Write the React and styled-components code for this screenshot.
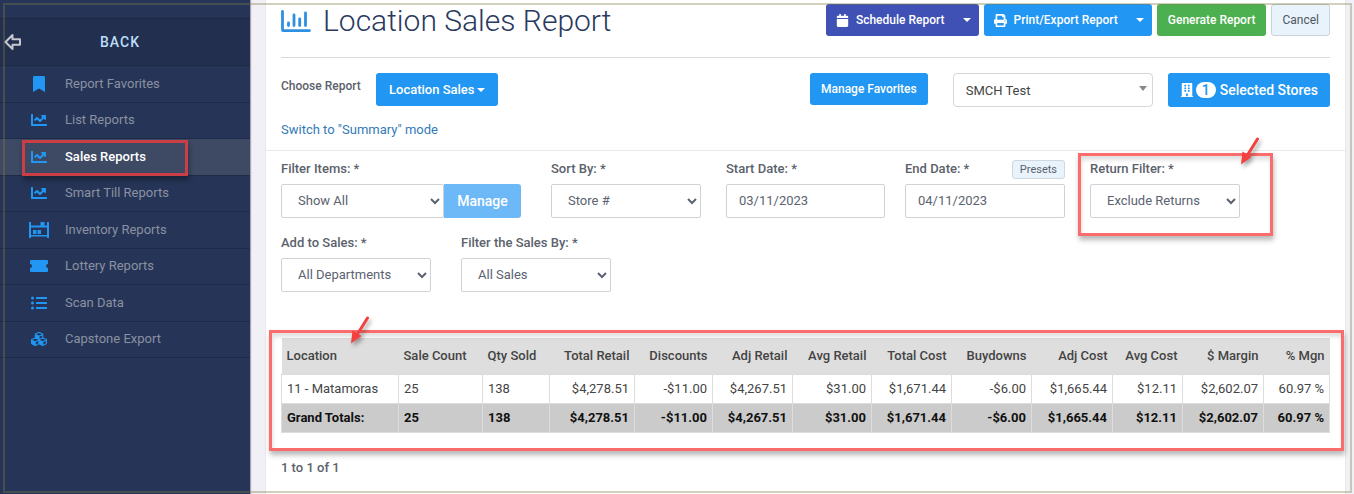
import React from "react";
import styled, { createGlobalStyle, css } from "styled-components";
import {
  FaBookmark,
  FaBuilding,
  FaCalendar,
  FaChartLine,
  FaCubes,
  FaListUl,
  FaPrint,
} from "react-icons/fa";

const GlobalStyle = createGlobalStyle`
  * {
    box-sizing: border-box;
  }
  body {
    margin: 0;
    background: #f1f0f6;
    color: #5b626b;
    font-family: Roboto, "Liberation Sans", sans-serif;
    font-size: 13px;
    line-height: 18px;
  }
  button, select, input {
    font-family: inherit;
    margin: 0;
  }
`;

const InventoryIcon = () => (
  <svg width="20" height="16" viewBox="0 0 20 16" fill="currentColor" aria-hidden="true">
    <path d="M0 0h2v3.500h16V0h2v16h-2v-1.500H2V16H0zM2 5.500v7.500h16V5.500z" fillRule="evenodd" />
    <path d="M11.500 0h4v4h-4zM4 8h3.500v4H4zM8.500 8h3.500v4H8.500z" />
  </svg>
);

const TicketIcon = () => (
  <svg width="18" height="12" viewBox="0 0 18 12" fill="currentColor" aria-hidden="true">
    <path d="M1 0h16a1 1 0 0 1 1 1v3a2 2 0 0 0 0 4v3a1 1 0 0 1-1 1H1a1 1 0 0 1-1-1V8a2 2 0 0 0 0-4V1a1 1 0 0 1 1-1z" />
  </svg>
);

const BackIcon = () => (
  <svg width="18" height="18" viewBox="0 0 18 18" fill="none" stroke="#c6c8cf" strokeWidth="2" strokeLinejoin="round" aria-hidden="true">
    <path d="M1.500 9 8.500 2v4.300H16v5.400H8.500V16z" />
  </svg>
);

const ChartIcon = () => (
  <svg width="30" height="22" viewBox="0 0 30 22" fill="none" stroke="#2f8fe0" strokeLinecap="round" aria-hidden="true">
    <path d="M1.500 1.500v18.600a.5.500 0 0 0 .5.500H28.500" strokeWidth="2.800" />
    <path d="M7.500 13v2.500M13 5v10.500M18.700 9v6.500M24.500 3v12.500" strokeWidth="2.800" />
  </svg>
);

const ArrowMark = () => (
  <svg width="22" height="30" viewBox="0 0 22 30" aria-hidden="true">
    <path d="M18.500 2 8.500 18" stroke="#f4403f" strokeWidth="3" strokeLinecap="round" />
    <path d="M2 27.500 3.500 14.500 12.500 20z" fill="#f4403f" />
  </svg>
);

const menu = [
  { name: "Report Favorites", icon: <FaBookmark /> },
  { name: "List Reports", icon: <FaChartLine /> },
  { name: "Sales Reports", icon: <FaChartLine />, active: true },
  { name: "Smart Till Reports", icon: <FaChartLine /> },
  { name: "Inventory Reports", icon: <InventoryIcon /> },
  { name: "Lottery Reports", icon: <TicketIcon /> },
  { name: "Scan Data", icon: <FaListUl /> },
  { name: "Capstone Export", icon: <FaCubes /> },
];

const columns = [
  { name: "Location", width: 117, left: true },
  { name: "Sale Count", width: 84, left: true },
  { name: "Qty Sold", width: 67, left: true },
  { name: "Total Retail", width: 85 },
  { name: "Discounts", width: 78 },
  { name: "Adj Retail", width: 80 },
  { name: "Avg Retail", width: 79 },
  { name: "Total Cost", width: 80 },
  { name: "Buydowns", width: 80 },
  { name: "Adj Cost", width: 81 },
  { name: "Avg Cost", width: 70 },
  { name: "$ Margin", width: 81 },
  { name: "% Mgn", width: 66 },
];

const values = [
  "25", "138", "$4,278.51", "-$11.00", "$4,267.51", "$31.00",
  "$1,671.44", "-$6.00", "$1,665.44", "$12.11", "$2,602.07", "60.97 %",
];

const SelectField = ({ id, label, value, marked }) => (
  <Field $width={150}>
    <LabelRow>
      <label htmlFor={id}>{label}</label>
    </LabelRow>
    <Select id={id} defaultValue={value}>
      <option>{value}</option>
    </Select>
    {marked && (
      <FieldMark>
        <ArrowMark />
      </FieldMark>
    )}
  </Field>
);

const Row = ({ first }) =>
  [first, ...values].map((value, i) => (
    <Cell key={columns[i].name} $left={columns[i].left}>
      {value}
    </Cell>
  ));

const App = () => {
  return (
    <Page>
      <GlobalStyle />
      <Sidebar>
        <BackButton type="button">
          <BackIcon />
          <span>BACK</span>
        </BackButton>
        <Menu>
          {menu.map(({ name, icon, active }) => (
            <MenuItem key={name} $active={active}>
              <a href="#">
                <MenuIcon>{icon}</MenuIcon>
                {name}
              </a>
            </MenuItem>
          ))}
        </Menu>
      </Sidebar>

      <Card>
        <Top>
          <Header>
            <Title>
              <ChartIcon />
              Location Sales Report
            </Title>
            <Actions>
              <SplitButton $color="#3f51b5">
                <button type="button">
                  <FaCalendar />
                  Schedule Report
                </button>
                <button type="button" aria-label="Schedule options">
                  <Caret />
                </button>
              </SplitButton>
              <SplitButton $color="#2196f3">
                <button type="button">
                  <FaPrint />
                  Print/Export Report
                </button>
                <button type="button" aria-label="Export options">
                  <Caret />
                </button>
              </SplitButton>
              <Button type="button" $color="#4caf50">Generate Report</Button>
              <LightButton type="button">Cancel</LightButton>
            </Actions>
          </Header>

          <ReportRow>
            <ChooseLabel>Choose Report</ChooseLabel>
            <Button type="button" $large>
              Location Sales
              <Caret />
            </Button>
            <Stores>
              <Button type="button">Manage Favorites</Button>
              <Picker>
                <select aria-label="Store group" defaultValue="SMCH Test">
                  <option>SMCH Test</option>
                </select>
              </Picker>
              <StoresButton type="button">
                <FaBuilding />
                <Badge>1</Badge>
                Selected Stores
              </StoresButton>
            </Stores>
          </ReportRow>
          <ModeLink href="#">Switch to "Summary" mode</ModeLink>
        </Top>

        <Filters>
          <FilterRow>
            <Field $width={240}>
              <LabelRow>
                <label htmlFor="items">Filter Items: *</label>
              </LabelRow>
              <InputGroup>
                <Select id="items" defaultValue="Show All">
                  <option>Show All</option>
                </Select>
                <ManageButton type="button">Manage</ManageButton>
              </InputGroup>
            </Field>
            <Cluster>
              <SelectField id="sort" label="Sort By: *" value="Store #" />
              <Dates>
                <Field $width={159}>
                  <LabelRow>
                    <label htmlFor="start">Start Date: *</label>
                  </LabelRow>
                  <Input id="start" defaultValue="03/11/2023" />
                </Field>
                <Field $width={160}>
                  <LabelRow>
                    <label htmlFor="end">End Date: *</label>
                    <Presets type="button">Presets</Presets>
                  </LabelRow>
                  <Input id="end" defaultValue="04/11/2023" />
                </Field>
              </Dates>
              <SelectField id="returns" label="Return Filter: *" value="Exclude Returns" marked />
            </Cluster>
          </FilterRow>
          <FilterRow>
            <SelectField id="add" label="Add to Sales: *" value="All Departments" />
            <SelectField id="by" label="Filter the Sales By: *" value="All Sales" />
          </FilterRow>
        </Filters>

        <Results>
          <Table>
            <colgroup>
              {columns.map(({ name, width }) => (
                <col key={name} width={width} />
              ))}
            </colgroup>
            <thead>
              <tr>
                {columns.map(({ name, left }) => (
                  <HeadCell key={name} $left={left}>{name}</HeadCell>
                ))}
              </tr>
            </thead>
            <tbody>
              <tr>
                <Row first="11 - Matamoras" />
              </tr>
            </tbody>
            <tfoot>
              <tr>
                <Row first="Grand Totals:" />
              </tr>
            </tfoot>
          </Table>
          <TableMark>
            <ArrowMark />
          </TableMark>
        </Results>
        <Count>1 to 1 of 1</Count>
      </Card>
      <Frame />
    </Page>
  );
};

const Page = styled.div`
  position: relative;
  display: flex;
  min-height: 100vh;
`;

/* thin outline drawn over the whole page */
const Frame = styled.div`
  position: absolute;
  inset: 3px 2px 1px 3px;
  border: 2px solid rgba(128, 126, 70, 0.36);
  pointer-events: none;
`;

const Sidebar = styled.aside`
  flex: 0 0 250px;
  padding-top: 18px;
  background: #263557;
  box-shadow: 1px 0 1px #a9a4ae;
`;

const BackButton = styled.button`
  display: grid;
  grid-template-columns: 18px 1fr 28px;
  align-items: center;
  width: 100%;
  height: 48px;
  padding: 0 4px;
  border: solid #1d2945;
  border-width: 1px 0;
  background: #222f4e;
  color: #bbdefb;
  font-size: 14px;
  font-weight: 500;
  letter-spacing: 1px;
  cursor: pointer;
`;

const Menu = styled.ul`
  display: grid;
  grid-auto-rows: 1fr;
  min-height: 292px;
  margin: 0;
  padding: 0;
  list-style: none;
`;

const MenuItem = styled.li`
  position: relative;
  border-bottom: 1px solid #1e2a48;
  background: ${({ $active }) => ($active ? "#3e4964" : "transparent")};
  a {
    display: flex;
    align-items: center;
    height: 100%;
    padding-left: 27px;
    color: ${({ $active }) => ($active ? "#ffffff" : "#8a91a1")};
    font-weight: ${({ $active }) => ($active ? 500 : 400)};
    text-decoration: none;
  }
  ${({ $active }) =>
    $active &&
    css`
      &::after {
        content: "";
        position: absolute;
        z-index: 1;
        inset: 1px 62px -1px 22px;
        border: 3px solid #c93f45;
        box-shadow: 1px 4px 5px rgba(0, 0, 0, 0.35);
        pointer-events: none;
      }
    `}
`;

const MenuIcon = styled.span`
  display: flex;
  justify-content: center;
  width: 24px;
  margin-right: 14px;
  color: #2196f3;
  font-size: 16px;
`;

const Card = styled.main`
  flex: 1;
  min-width: 0;
  margin: 0 9px 0 16px;
  background: #ffffff;
  box-shadow: 0 0 1px #c4c4cc;
`;

const Top = styled.section`
  padding: 4px 15px 10px;
  border-bottom: 1px solid #e9e9ec;
`;

const Header = styled.header`
  display: flex;
  justify-content: space-between;
  align-items: flex-start;
  padding-bottom: 19px;
  border-bottom: 1px solid #d9d9d9;
`;

const Title = styled.h1`
  display: flex;
  align-items: center;
  gap: 12px;
  margin: 0;
  color: #2a3a5e;
  font-size: 30px;
  font-weight: 300;
  line-height: 34px;
`;

const Actions = styled.div`
  display: flex;
  gap: 5px;
`;

const Button = styled.button`
  display: flex;
  align-items: center;
  gap: 2px;
  height: ${({ $large }) => ($large ? 33 : 32)}px;
  padding: 0 ${({ $large }) => ($large ? 13 : 11)}px;
  border: 0;
  border-radius: 3px;
  background: ${({ $color }) => $color || "#2196f3"};
  color: #ffffff;
  font-size: ${({ $large }) => ($large ? 13 : 12)}px;
  font-weight: 500;
  white-space: nowrap;
  cursor: pointer;
`;

const SplitButton = styled.div`
  display: flex;
  border-radius: 3px;
  background: ${({ $color }) => $color};
  button {
    display: flex;
    align-items: center;
    gap: 7px;
    height: 32px;
    padding: 0 8px 0 10px;
    border: 0;
    background: none;
    color: #ffffff;
    font-size: 12px;
    font-weight: 500;
    white-space: nowrap;
    cursor: pointer;
  }
  svg {
    font-size: 13px;
  }
`;

const LightButton = styled.button`
  height: 32px;
  padding: 0 10px;
  border: 1px solid #ccd3da;
  border-radius: 3px;
  background: #e8f3fc;
  color: #4f565e;
  font-size: 12px;
  cursor: pointer;
`;

const Caret = styled.span`
  border: 4px solid transparent;
  border-top-color: currentColor;
  border-bottom: 0;
`;

const ReportRow = styled.div`
  display: flex;
  align-items: flex-start;
  margin-top: 15px;
`;

const ChooseLabel = styled.span`
  width: 95px;
  padding-top: 4px;
  font-size: 12px;
  font-weight: 500;
`;

const Stores = styled.div`
  display: flex;
  align-items: flex-start;
  margin-left: auto;
`;

const Picker = styled.div`
  position: relative;
  margin: 0 15px 0 25px;
  select {
    width: 200px;
    height: 34px;
    padding: 0 12px;
    border: 1px solid #d3d6da;
    border-radius: 4px;
    background: #ffffff;
    color: #444444;
    font-size: 13px;
    appearance: none;
  }
  &::after {
    content: "";
    position: absolute;
    top: 13px;
    right: 6px;
    border: 4px solid transparent;
    border-top: 5px solid #888888;
    border-bottom: 0;
    pointer-events: none;
  }
`;

const StoresButton = styled(Button)`
  height: 34px;
  padding: 0 12px;
  font-size: 14px;
`;

const Badge = styled.span`
  padding: 0 6px;
  margin-right: 2px;
  border-radius: 9px;
  background: #ffffff;
  color: #2196f3;
`;

const ModeLink = styled.a`
  display: block;
  width: max-content;
  margin-top: 13px;
  color: #337ab7;
  line-height: 20px;
  text-decoration: none;
`;

const Filters = styled.form`
  display: flex;
  flex-direction: column;
  gap: 16px;
  padding: 9px 15px 0;
`;

const FilterRow = styled.div`
  display: flex;
  gap: 30px;
`;

const Cluster = styled.div`
  display: flex;
  gap: 25px;
`;

const Dates = styled.div`
  display: flex;
  gap: 20px;
`;

const Field = styled.div`
  position: relative;
  width: ${({ $width }) => $width}px;
`;

const LabelRow = styled.div`
  display: flex;
  justify-content: space-between;
  height: 18px;
  margin-bottom: 6px;
  font-weight: 500;
`;

const fieldBox = css`
  width: 100%;
  height: 34px;
  border: 1px solid #cfd2d6;
  border-radius: 2px;
  background: #ffffff;
  color: #5b6270;
  font-size: 13px;
`;

const Select = styled.select`
  ${fieldBox}
  padding: 0 0 2px 12px;
`;

const Input = styled.input`
  ${fieldBox}
  padding: 0 12px 2px;
`;

const InputGroup = styled.div`
  display: flex;
`;

const ManageButton = styled.button`
  flex: 0 0 77px;
  border: 0;
  border-radius: 0 3px 3px 0;
  background: #6db9f7;
  color: #ffffff;
  font-size: 14px;
  font-weight: 500;
`;

const Presets = styled.button`
  height: 19px;
  padding: 0 7px;
  border: 1px solid #ccd8e2;
  border-radius: 3px;
  background: #e8f3fc;
  color: #5b6270;
  font-size: 11px;
  line-height: 16px;
`;

const mark = css`
  position: absolute;
  border: 3px solid #fb6c6c;
  box-shadow: 1px 4px 5px rgba(0, 0, 0, 0.28), inset 1px 4px 4px rgba(0, 0, 0, 0.12);
  pointer-events: none;
  svg {
    position: absolute;
    filter: drop-shadow(2px 3px 2px rgba(0, 0, 0, 0.35));
  }
`;

const FieldMark = styled.div`
  ${mark}
  inset: -7px -33px -18px -12px;
  svg {
    top: -19px;
    right: 9px;
  }
`;

const Results = styled.section`
  position: relative;
  margin: 46px 15px 0;
`;

const TableMark = styled.div`
  ${mark}
  inset: -8px -14px -18px -12px;
  svg {
    top: -17px;
    left: 77px;
  }
`;

const Table = styled.table`
  width: 100%;
  table-layout: fixed;
  border-collapse: collapse;
  color: #444444;
  tfoot {
    background: #cbcbcb;
    color: #111111;
    font-weight: 700;
  }
`;

const HeadCell = styled.th`
  height: 36px;
  padding: 0 5px;
  background: #dedede;
  font-weight: 500;
  text-align: ${({ $left }) => ($left ? "left" : "right")};
  white-space: nowrap;
`;

const Cell = styled.td`
  height: 29px;
  padding: 0 5px;
  border: 1px solid #dddddd;
  text-align: ${({ $left }) => ($left ? "left" : "right")};
  white-space: nowrap;
`;

const Count = styled.p`
  margin: 25px 15px 0;
  font-weight: 500;
  line-height: 20px;
`;

export default App;
